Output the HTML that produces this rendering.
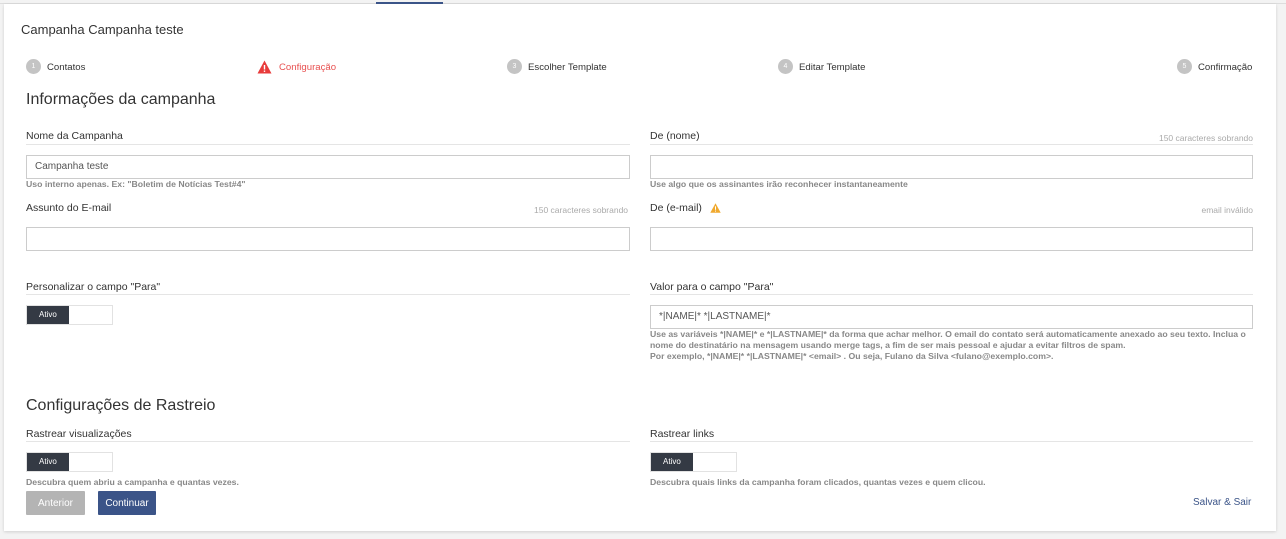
<!DOCTYPE html><html><head><meta charset="utf-8"><style>
*{box-sizing:border-box;margin:0;padding:0}
body{width:1286px;height:539px;background:#f3f3f3;font-family:"Liberation Sans",sans-serif;color:#333;position:relative;overflow:hidden}
.card{position:absolute;left:4px;top:4px;width:1272px;height:527px;background:#fff;box-shadow:0 1px 3px rgba(0,0,0,.15)}
.a{position:absolute;white-space:nowrap}
.topline{position:absolute;left:0;top:3px;width:1286px;height:1px;background:#ddd}
.tab{position:absolute;left:376px;top:2px;width:67px;height:2px;background:#3b5488}
.step{font-size:9.6px;color:#333}
.num{position:absolute;width:15px;height:15px;border-radius:50%;background:#c4c4c4;color:#fff;font-size:7px;text-align:center;line-height:15px}
h2{font-weight:normal;font-size:16px;color:#333}
.lbl{font-size:10.5px;color:#333}
.rule{position:absolute;height:1px;background:#e5e5e5}
.inp{position:absolute;height:24px;border:1px solid #ccc;font-size:10px;color:#555;padding:0 8px;line-height:22px}
.help{font-size:8.7px;font-weight:bold;color:#888;line-height:11px}
.cnt{font-size:8.5px;color:#aaa}
.tog{position:absolute;width:87px;height:20px;border:1px solid #e2e2e2}
.tog span{position:absolute;left:0;top:0;width:42px;height:18px;background:#343a44;color:#fff;font-size:8px;line-height:18px;padding-left:12px}
.btn{position:absolute;height:24px;font-size:10px;line-height:25px;text-align:center;color:#fff;border-radius:1px}
</style></head><body>
<div class="topline"></div>
<div class="card"></div>
<div class="tab"></div>
<div class="a" style="left:21px;top:22px;font-size:13px">Campanha Campanha teste</div>

<div class="num" style="left:26px;top:59px">1</div><div class="a step" style="left:47px;top:62px">Contatos</div>
<svg class="a" style="left:257px;top:60px" width="15" height="14" viewBox="0 0 15 14"><path d="M7.5 0.5L14.5 13.5H0.5Z" fill="#e83b3b"/><rect x="6.8" y="5" width="1.4" height="4.5" fill="#fff"/><rect x="6.8" y="10.5" width="1.4" height="1.4" fill="#fff"/></svg>
<div class="a step" style="left:279px;top:62px;color:#e85050">Configuração</div>
<div class="num" style="left:507px;top:59px">3</div><div class="a step" style="left:528px;top:62px">Escolher Template</div>
<div class="num" style="left:778px;top:59px">4</div><div class="a step" style="left:799px;top:62px">Editar Template</div>
<div class="num" style="left:1177px;top:59px">5</div><div class="a step" style="left:1198px;top:62px">Confirmação</div>

<h2 class="a" style="left:26px;top:91px">Informações da campanha</h2>

<div class="a lbl" style="left:26px;top:130px">Nome da Campanha</div>
<div class="rule" style="left:26px;top:144px;width:604px"></div>
<div class="inp" style="left:26px;top:155px;width:604px">Campanha teste</div>
<div class="a help" style="left:26px;top:179px">Uso interno apenas. Ex: "Boletim de Notícias Test#4"</div>

<div class="a lbl" style="left:650px;top:130px">De (nome)</div>
<div class="a cnt" style="right:33px;top:133px">150 caracteres sobrando</div>
<div class="rule" style="left:650px;top:144px;width:603px"></div>
<div class="inp" style="left:650px;top:155px;width:603px"></div>
<div class="a help" style="left:650px;top:179px">Use algo que os assinantes irão reconhecer instantaneamente</div>

<div class="a lbl" style="left:26px;top:202px">Assunto do E-mail</div>
<div class="a cnt" style="left:534px;top:205px">150 caracteres sobrando</div>
<div class="inp" style="left:26px;top:227px;width:604px"></div>

<div class="a lbl" style="left:650px;top:202px">De (e-mail)</div>
<svg class="a" style="left:710px;top:203px" width="11" height="10" viewBox="0 0 11 10"><path d="M5.5 0.3L10.7 9.7H0.3Z" fill="#f0a92e"/><rect x="5" y="3.3" width="1" height="3.5" fill="#fff"/><rect x="5" y="7.6" width="1" height="1" fill="#fff"/></svg>
<div class="a cnt" style="right:33px;top:205px">email inválido</div>
<div class="inp" style="left:650px;top:227px;width:603px"></div>

<div class="a lbl" style="left:26px;top:281px">Personalizar o campo "Para"</div>
<div class="rule" style="left:26px;top:294px;width:604px"></div>
<div class="tog" style="left:26px;top:305px"><span>Ativo</span></div>

<div class="a lbl" style="left:650px;top:281px">Valor para o campo "Para"</div>
<div class="rule" style="left:650px;top:294px;width:603px"></div>
<div class="inp" style="left:650px;top:305px;width:603px">*|NAME|* *|LASTNAME|*</div>
<div class="a help" style="left:650px;top:329px">Use as variáveis *|NAME|* e *|LASTNAME|* da forma que achar melhor. O email do contato será automaticamente anexado ao seu texto. Inclua o<br>nome do destinatário na mensagem usando merge tags, a fim de ser mais pessoal e ajudar a evitar filtros de spam.<br>Por exemplo, *|NAME|* *|LASTNAME|* &lt;email&gt; . Ou seja, Fulano da Silva &lt;fulano@exemplo.com&gt;.</div>

<h2 class="a" style="left:26px;top:397px">Configurações de Rastreio</h2>

<div class="a lbl" style="left:26px;top:428px">Rastrear visualizações</div>
<div class="rule" style="left:26px;top:441px;width:604px"></div>
<div class="tog" style="left:26px;top:452px"><span>Ativo</span></div>
<div class="a help" style="left:26px;top:477px">Descubra quem abriu a campanha e quantas vezes.</div>

<div class="a lbl" style="left:650px;top:428px">Rastrear links</div>
<div class="rule" style="left:650px;top:441px;width:603px"></div>
<div class="tog" style="left:650px;top:452px"><span>Ativo</span></div>
<div class="a help" style="left:650px;top:477px">Descubra quais links da campanha foram clicados, quantas vezes e quem clicou.</div>

<div class="btn" style="left:26px;top:491px;width:59px;background:#b4b4b4">Anterior</div>
<div class="btn" style="left:98px;top:491px;width:58px;background:#3b5488">Continuar</div>
<div class="a" style="left:1193px;top:497px;font-size:10px;color:#3b5488">Salvar &amp; Sair</div>
</body></html>
